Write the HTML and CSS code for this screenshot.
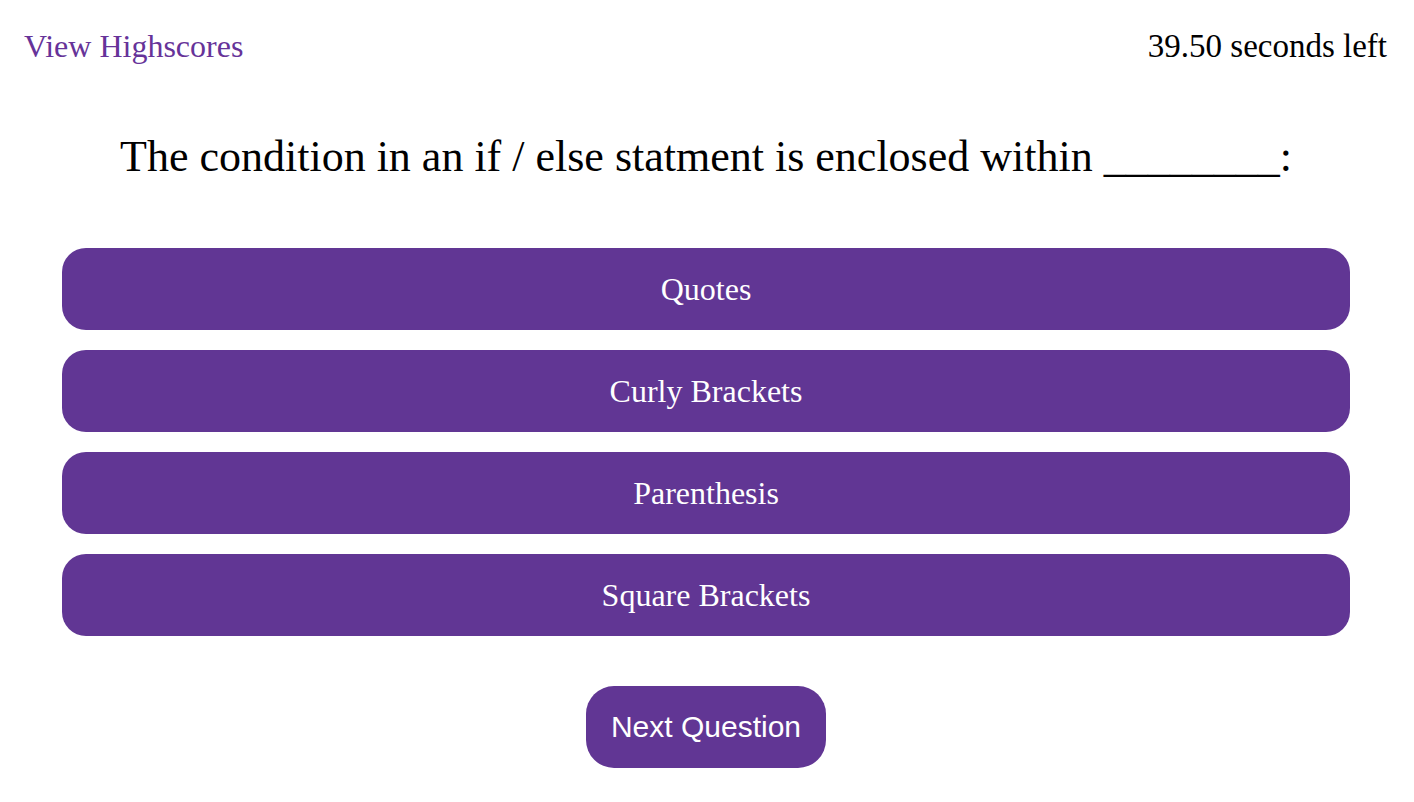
FILE: index.html
```html
<!DOCTYPE html>
<html lang="en">
<head>
<meta charset="utf-8">
<title>Quiz</title>
<link rel="stylesheet" href="styles.css">
</head>
<body>
<header class="top-bar">
  <a class="highscores-link" href="#">View Highscores</a>
  <div class="timer">39.50 seconds left</div>
</header>
<main class="quiz">
  <h1 class="question">The condition in an if / else statment is enclosed within ________:</h1>
  <div class="answers">
    <button class="answer">Quotes</button>
    <button class="answer">Curly Brackets</button>
    <button class="answer">Parenthesis</button>
    <button class="answer">Square Brackets</button>
  </div>
  <button class="next">Next Question</button>
</main>
</body>
</html>
```
FILE: styles.css
```css
html, body {
  margin: 0;
  padding: 0;
  background: #ffffff;
}
body {
  font-family: "Liberation Serif", "DejaVu Serif", serif;
  color: #000;
}
.top-bar {
  display: flex;
  justify-content: space-between;
  align-items: center;
  padding: 28px 27px 0 24px;
  height: 36px;
}
.highscores-link {
  color: #663399;
  text-decoration: none;
  font-size: 32px;
  line-height: 36px;
}
.timer {
  font-size: 33px;
  line-height: 36px;
}
.quiz {
  display: flex;
  flex-direction: column;
  align-items: center;
  padding: 0 64px 0 62px;
}
.question {
  font-weight: normal;
  font-size: 44px;
  line-height: 50px;
  margin: 68px 0 0 0;
  text-align: center;
}
.answers {
  display: flex;
  flex-direction: column;
  gap: 20px;
  width: 100%;
  margin-top: 66px;
}
.answer {
  height: 82px;
  border: none;
  border-radius: 24px;
  background: #613694;
  color: #fff;
  font-family: "Liberation Serif", "DejaVu Serif", serif;
  font-size: 32px;
}
.next {
  margin-top: 50px;
  width: 240px;
  height: 82px;
  border: none;
  border-radius: 28px;
  background: #613694;
  color: #fff;
  font-family: "Liberation Sans", Arial, sans-serif;
  font-size: 30px;
}
```
